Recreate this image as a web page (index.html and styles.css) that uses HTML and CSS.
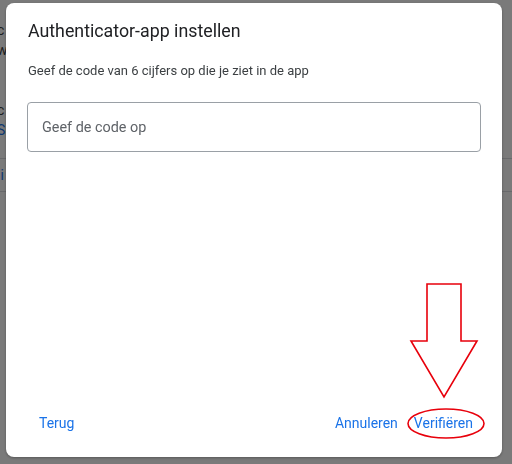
FILE: index.html
```html
<!DOCTYPE html>
<html lang="nl">
<head>
    <meta charset="UTF-8">
    <meta name="viewport" content="width=device-width, initial-scale=1.0">
    <title>Authenticator-app instellen</title>
    <link rel="stylesheet" href="styles.css">
</head>
<body>
    <div class="page">
        <p class="peek peek-1">c</p>
        <p class="peek peek-2">w</p>
        <p class="peek peek-3">c</p>
        <p class="peek peek-4 link">S</p>
        <div class="rule"></div>
        <p class="peek peek-5 link">ii</p>
        <div class="rule"></div>
    </div>

    <div class="scrim">
        <div class="dialog">
            <h1 class="dialog-title">Authenticator-app instellen</h1>
            <p class="dialog-text">Geef de code van 6 cijfers op die je ziet in de app</p>
            <input class="code-input" type="text" placeholder="Geef de code op">

            <div class="dialog-actions">
                <button class="btn" type="button">Terug</button>
                <div class="actions-right">
                    <button class="btn" type="button">Annuleren</button>
                    <button class="btn" type="button">Verifiëren</button>
                </div>
            </div>
        </div>

        <svg class="markup" width="512" height="464" viewBox="0 0 512 464">
            <polygon points="427,284 461,284 461,341 477,341 444,397 411,341 427,341"
                     fill="none" stroke="#e8000b" stroke-width="1.6"/>
            <ellipse cx="446" cy="423.5" rx="38" ry="14.5"
                     fill="none" stroke="#e8000b" stroke-width="1.6"/>
        </svg>
    </div>
</body>
</html>
```

FILE: styles.css
```css
* {
    margin: 0;
    padding: 0;
    box-sizing: border-box;
}
body {
    font-family: Roboto, 'Noto Sans', Arial, sans-serif;
    background: white;
    color: #202124;
    width: 512px;
    height: 464px;
    overflow: hidden;
}

/* page behind the modal, only its left edge shows */
.page {
    padding-top: 20px;
    margin-left: -3px;
}
.peek {
    font-size: 14px;
    line-height: 20px;
    color: #3c4043;
}
.peek-2 {
    margin-bottom: 40px;
}
.peek-4 {
    margin-bottom: 18px;
}
.peek-5 {
    padding: 6px 0;
}
.link {
    color: #1a73e8;
}
.rule {
    border-top: 1px solid #dadce0;
    width: 100%;
}

.scrim {
    position: fixed;
    inset: 0;
    background: rgba(0, 0, 0, 0.52);
    padding: 3px 0 0 6px;
    display: flex;
    align-items: flex-start;
}
.dialog {
    width: 496px;
    height: 454px;
    background: white;
    border-radius: 8px;
    box-shadow: 0 1px 3px rgba(0, 0, 0, 0.3);
    padding: 15px 21px 16px 21px;
    display: flex;
    flex-direction: column;
}
.dialog-title {
    font-size: 17.8px;
    font-weight: 400;
    line-height: 26px;
    padding-left: 1px;
    color: #202124;
}
.dialog-text {
    font-size: 13px;
    line-height: 20px;
    margin-top: 17px;
    padding-left: 1px;
    color: #3c4043;
}
.code-input {
    margin-top: 21px;
    width: 100%;
    height: 50px;
    border: 1px solid #9aa0a6;
    border-radius: 4px;
    padding: 0 14px;
    font-family: inherit;
    font-size: 14.4px;
    color: #202124;
    outline: none;
}
.code-input::placeholder {
    color: #5f6368;
}
.dialog-actions {
    margin-top: auto;
    display: flex;
    justify-content: space-between;
    align-items: center;
    padding-left: 4px;
}
.actions-right {
    display: flex;
}
.btn {
    height: 36px;
    padding: 0 8px;
    background: none;
    border: none;
    font-family: inherit;
    font-size: 14px;
    color: #1a73e8;
    cursor: pointer;
}

.markup {
    position: absolute;
    left: 0;
    top: 0;
    pointer-events: none;
}
```
